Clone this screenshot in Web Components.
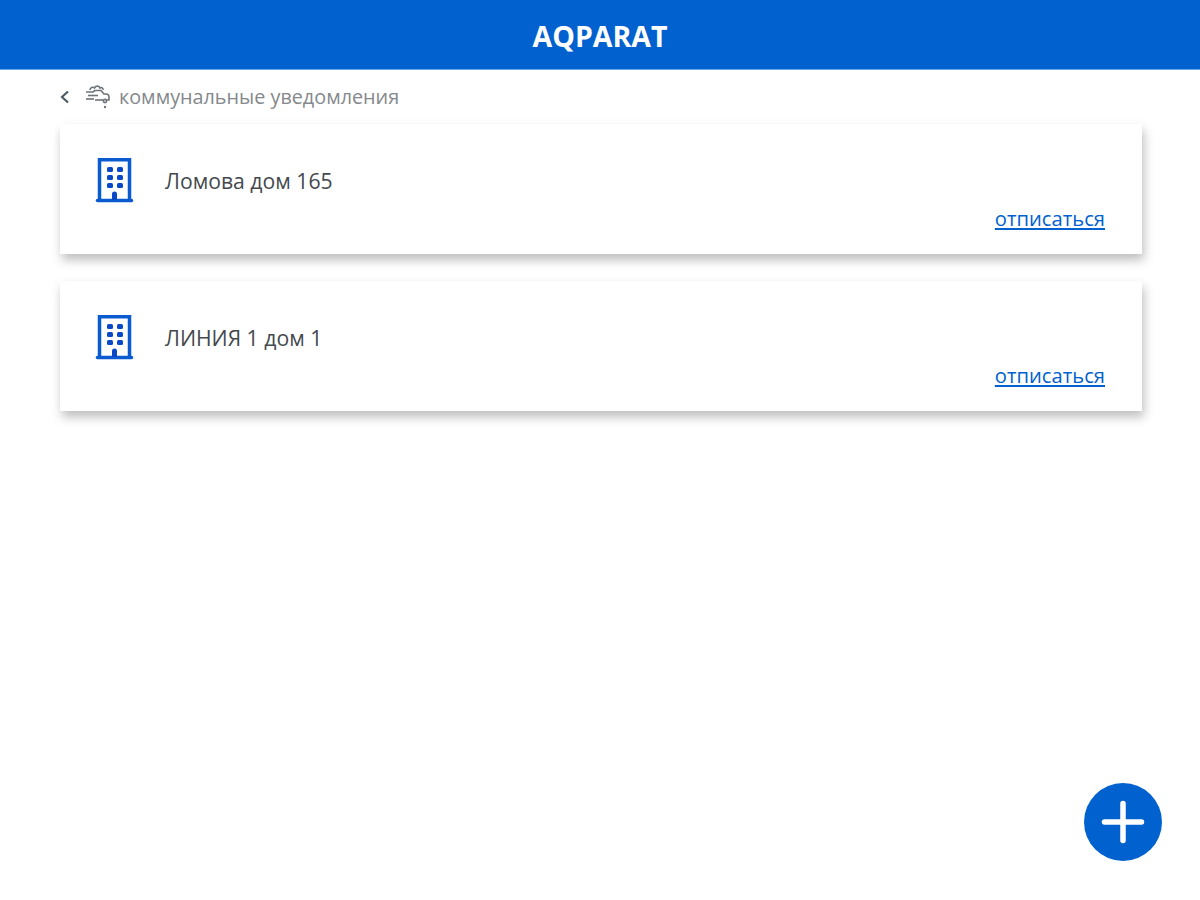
<!DOCTYPE html>
<html lang="ru">
<head>
<meta charset="utf-8">
<title>AQPARAT</title>
<style>
  html, body { margin: 0; height: 100%; background: #fff; }
  body { font-family: "Open Sans", "Noto Sans", sans-serif; }
</style>
</head>
<body>
<app-shell>
  <app-bar slot="bar">AQPARAT</app-bar>
  <back-line>коммунальные уведомления</back-line>
  <address-card>Ломова дом 165</address-card>
  <address-card>ЛИНИЯ 1 дом 1</address-card>
  <add-button slot="fab"></add-button>
</app-shell>

<script>
// Page frame: bar on top, content below, floating button over it
class AppShell extends HTMLElement {
  constructor() {
    super();
    this.attachShadow({ mode: "open" });
    this.shadowRoot.innerHTML = `
      <style>
        :host { display: block; position: relative; height: 900px; overflow: hidden; }
        .content { display: flex; flex-direction: column; gap: 27px; padding: 0 58px 0 60px; }
      </style>
      <slot name="bar"></slot>
      <div class="content"><slot></slot></div>
      <slot name="fab"></slot>
    `;
  }
}

class AppBar extends HTMLElement {
  constructor() {
    super();
    this.attachShadow({ mode: "open" });
    this.shadowRoot.innerHTML = `
      <style>
        :host {
          display: flex;
          align-items: center;
          justify-content: center;
          box-sizing: border-box;
          height: 70px;
          padding-top: 2px;
          background: #0061cf;
          border-bottom: 1px solid #6aa6ec;
          color: #fff;
          font-size: 28.5px;
          font-weight: 700;
        }
      </style>
      <slot></slot>
    `;
  }
}

// Back arrow, section icon and section title
class BackLine extends HTMLElement {
  constructor() {
    super();
    this.attachShadow({ mode: "open" });
    this.shadowRoot.innerHTML = `
      <style>
        :host {
          display: flex;
          align-items: center;
          height: 54px;
          margin-bottom: -27px;
          color: #85888c;
          font-size: 19.8px;
        }
        svg { flex: none; }
        .back { margin-right: 14px; margin-left: -1px; }
        .kind { margin-right: 9px; }
        span { padding-bottom: 2px; }
      </style>
      <svg class="back" width="12" height="18" viewBox="0 0 12 18" fill="none" stroke="#4f5b66" stroke-width="2.2">
        <path d="M9 3.500 L3 9 L9 14.500"/>
      </svg>
      <svg class="kind" width="25" height="26" viewBox="0 0 25 26" fill="none" stroke="#6f7479" stroke-width="1.600">
        <path d="M5 6c0-2.500 3-3.500 4.500-2c1-2.500 5-2.500 5.500 0c1.500-1 3.500 0 3 2"/>
        <path d="M1 8h7l2-1.500h6l3 3.500h2c2 0 3 1.500 3 3v3h-3"/>
        <path d="M3 11.500h10"/>
        <path d="M1 15h8"/>
        <path d="M10 16h8"/>
        <circle cx="20" cy="17" r="1.600"/>
        <circle cx="20" cy="23" r="1.200" fill="#6f7479" stroke="none"/>
      </svg>
      <span><slot></slot></span>
    `;
  }
}

// One subscribed address
class AddressCard extends HTMLElement {
  constructor() {
    super();
    this.attachShadow({ mode: "open" });
    this.shadowRoot.innerHTML = `
      <style>
        :host {
          display: grid;
          grid-template-columns: auto 1fr;
          grid-template-rows: auto auto;
          align-content: start;
          box-sizing: border-box;
          height: 130px;
          padding: 34px 37px 0 35px;
          background: #fff;
          box-shadow: 2px 6px 10px rgba(0, 0, 0, .26);
          color: #44494e;
          font-size: 21.2px;
        }
        svg { display: block; margin-right: 30px; }
        .name { align-self: center; padding-bottom: 2px; }
        a {
          grid-column: 1 / 3;
          justify-self: end;
          margin-top: 2px;
          color: #0061cf;
          font-size: 20.2px;
          line-height: 24px;
        }
      </style>
      <svg width="40" height="46" viewBox="0 0 40 46" fill="none">
        <path d="M4.500 42V1.750h30V42" stroke="#0a5bd0" stroke-width="3.500"/>
        <path d="M2.500 42.500h34" stroke="#0a5bd0" stroke-width="3.500" stroke-linecap="round"/>
        <g fill="#0a48c8">
          <rect x="12" y="9" width="6" height="5" rx="1.500"/>
          <rect x="22" y="9" width="6" height="5" rx="1.500"/>
          <rect x="12" y="17" width="6" height="5" rx="1.500"/>
          <rect x="22" y="17" width="6" height="5" rx="1.500"/>
          <rect x="12" y="25" width="6" height="5" rx="1.500"/>
          <rect x="22" y="25" width="6" height="5" rx="1.500"/>
          <path d="M17 42v-6a2.500 2.500 0 0 1 5 0v6z"/>
        </g>
      </svg>
      <span class="name"><slot></slot></span>
      <a href="#">отписаться</a>
    `;
  }
}

class AddButton extends HTMLElement {
  constructor() {
    super();
    this.attachShadow({ mode: "open" });
    this.shadowRoot.innerHTML = `
      <style>
        :host {
          position: absolute;
          right: 38px;
          bottom: 39px;
          display: flex;
          align-items: center;
          justify-content: center;
          width: 78px;
          height: 78px;
          border-radius: 50%;
          background: #0061cf;
        }
      </style>
      <svg width="44" height="44" viewBox="0 0 44 44" stroke="#fff" stroke-width="5.500" stroke-linecap="round">
        <path d="M22 3.500v37M3.500 22h37"/>
      </svg>
    `;
  }
}

customElements.define("app-shell", AppShell);
customElements.define("app-bar", AppBar);
customElements.define("back-line", BackLine);
customElements.define("address-card", AddressCard);
customElements.define("add-button", AddButton);
</script>
</body>
</html>
